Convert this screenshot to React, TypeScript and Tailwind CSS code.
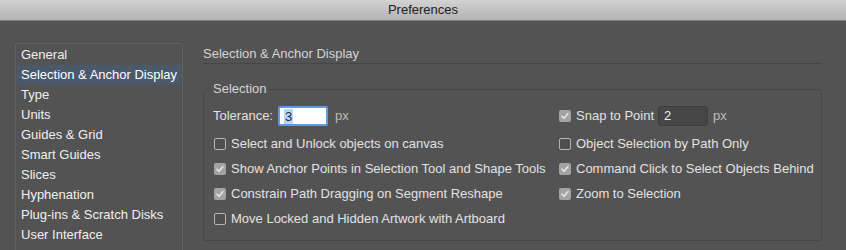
import React from 'react';

const sections = [
  'General',
  'Selection & Anchor Display',
  'Type',
  'Units',
  'Guides & Grid',
  'Smart Guides',
  'Slices',
  'Hyphenation',
  'Plug-ins & Scratch Disks',
  'User Interface',
  'Performance',
  'File Handling & Clipboard',
];

const Checkbox: React.FC<{ checked?: boolean; label: string }> = ({ checked, label }) => (
  <div className="flex items-center gap-[5px] h-[20px]">
    {checked ? (
      <span className="ml-px w-[12px] h-[12px] rounded-[2px] bg-[#a3a3a3] flex items-center justify-center">
        <svg width="10" height="10" viewBox="0 0 10 10">
          <path d="M2 5.2 L4.1 7.3 L8 2.6" fill="none" stroke="#e4e4e4" strokeWidth="1.6" strokeLinecap="round" strokeLinejoin="round" />
        </svg>
      </span>
    ) : (
      <span className="ml-px w-[12px] h-[12px] rounded-[2px] border border-[#b5b5b5] bg-[#4f4f4f]" />
    )}
    <span className="text-[#e2e2e2]">{label}</span>
  </div>
);

export default function App() {
  return (
    <div className="w-[846px] h-[250px] overflow-hidden bg-[#535353] text-[13px] font-['Liberation_Sans',Arial,sans-serif]">
      {/* Title bar */}
      <div className="h-[21px] flex items-center justify-center bg-gradient-to-b from-[#d2d2d2] to-[#b3b3b3] border-b border-[#7d7d7d] text-[#222]">
        Preferences
      </div>

      <div className="flex pl-[15px] pt-[23px]">
        {/* Sidebar */}
        <div className="w-[168px] h-[260px] -mt-px border border-[#626262] rounded-[3px] pt-px">
          {sections.map((s, i) => (
            <div
              key={s}
              className={`h-[20px] mx-px pl-[4px] flex items-center whitespace-nowrap ${
                i === 1 ? 'bg-[#4a596c] text-white' : 'text-[#f0f0f0]'
              }`}
            >
              {s}
            </div>
          ))}
        </div>

        {/* Right panel */}
        <div className="ml-[20px] w-[619px] flex flex-col">
          <div className="h-[20px] flex items-center border-b border-[#464646] text-[#d4d4d4]">
            Selection &amp; Anchor Display
          </div>

          <fieldset className="mt-[17px] border border-[#474747] rounded-[3px] pb-[11px]">
            <legend className="ml-[7px] px-[2px] h-[16px] leading-[16px] text-[#d4d4d4]">Selection</legend>

            <div className="grid grid-cols-[345px_1fr] gap-y-[5px] pl-[9px] mt-[9px]">
              <div className="flex items-center h-[20px] mb-[3px]">
                <span className="text-[#e2e2e2]">Tolerance:</span>
                <div className="ml-[5px] w-[50px] h-[20px] bg-white border-2 border-[#5f9be0] rounded-[2px] flex items-center pl-[4px]">
                  <span className="bg-[#b4d5fe] text-[#2a2a2a] px-[1px] leading-[15px]">3</span>
                </div>
                <span className="ml-[7px] text-[#bdbdbd]">px</span>
              </div>
              <div className="flex items-center h-[20px] mb-[3px]">
                <Checkbox checked label="Snap to Point" />
                <div className="ml-[4px] w-[50px] h-[20px] bg-[#464646] border border-[#3e3e3e] rounded-[3px] flex items-center pl-[5px] text-[#ececec]">
                  2
                </div>
                <span className="ml-[5px] text-[#bdbdbd]">px</span>
              </div>

              <Checkbox label="Select and Unlock objects on canvas" />
              <Checkbox label="Object Selection by Path Only" />

              <Checkbox checked label="Show Anchor Points in Selection Tool and Shape Tools" />
              <Checkbox checked label="Command Click to Select Objects Behind" />

              <Checkbox checked label="Constrain Path Dragging on Segment Reshape" />
              <Checkbox checked label="Zoom to Selection" />

              <Checkbox label="Move Locked and Hidden Artwork with Artboard" />
            </div>
          </fieldset>
        </div>
      </div>
    </div>
  );
}
